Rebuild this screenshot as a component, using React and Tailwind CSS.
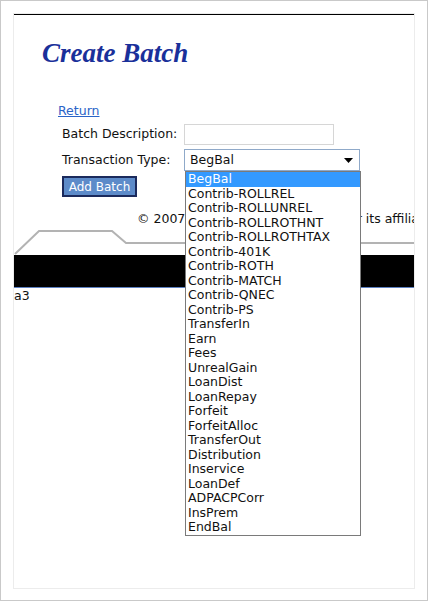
import React from 'react';

const options = [
  'BegBal', 'Contrib-ROLLREL', 'Contrib-ROLLUNREL', 'Contrib-ROLLROTHNT', 'Contrib-ROLLROTHTAX',
  'Contrib-401K', 'Contrib-ROTH', 'Contrib-MATCH', 'Contrib-QNEC', 'Contrib-PS', 'TransferIn',
  'Earn', 'Fees', 'UnrealGain', 'LoanDist', 'LoanRepay', 'Forfeit', 'ForfeitAlloc', 'TransferOut',
  'Distribution', 'Inservice', 'LoanDef', 'ADPACPCorr', 'InsPrem', 'EndBal',
];

const App = () => {
  return (
    <div className="relative w-[428px] h-[601px] overflow-hidden bg-white border border-[#c9c9c9] font-['DejaVu_Sans',sans-serif] text-[12.5px] text-[#111]">
      {/* ── Page panel ── */}
      <div className="ml-[12px] mt-[12px] w-[402px] h-[576px] border border-[#ececec]">
        <div className="h-px bg-black" />

        <h1 className="pl-[28px] pt-[22px] font-['Liberation_Serif',serif] italic font-bold text-[27px] leading-[32px] text-[#1a309a]">
          Create Batch
        </h1>

        {/* ── Form ── */}
        <div className="pt-[34px] pl-[44px]">
          <a href="#" className="text-[#2a64c8] underline leading-[15px] block">Return</a>
          <div className="mt-[5px] pl-[4px] flex items-center gap-[5px] h-[22px]">
            <span className="w-[117px] whitespace-nowrap">Batch Description:</span>
            <div className="w-[150px] h-[21px] border border-[#d6d6d6]" />
          </div>
          <div className="mt-[4px] pl-[4px] flex items-center gap-[5px] h-[22px]">
            <span className="w-[117px] whitespace-nowrap">Transaction Type:</span>
            <div className="w-[176px] h-[22px] border border-[#8fa9c9] flex items-center justify-between pl-[5px] pr-[6px]">
              <span>BegBal</span>
              <svg width="9" height="5" viewBox="0 0 9 5"><path d="M0 0h9L4.5 5z" fill="#000" /></svg>
            </div>
          </div>
          <div className="mt-[5px] pl-[4px]">
            <button className="w-[75px] h-[21px] border-2 border-[#1b2a5c] bg-[#5d8bc9] text-white text-[12px] leading-none">
              Add Batch
            </button>
          </div>
        </div>

        <p className="mt-[14px] pl-[123px] whitespace-nowrap overflow-hidden leading-[15px]">
          © 2007 ADP Retirement Services or its affiliates
        </p>

        {/* ── Tab strip ── */}
        <svg className="block mt-[3px]" width="400" height="26" viewBox="0 0 400 26">
          <path d="M1 25 L25 2 L98 2 L112 14 L400 14" fill="none" stroke="#b3b3b3" strokeWidth="2" />
        </svg>
        <div className="h-[33px] bg-black border-b border-[#5b7fc0]" />
        <p className="leading-[15px]">a3</p>
      </div>

      {/* ── Open select list ── */}
      <ul className="absolute left-[184px] top-[170px] w-[176px] bg-white border border-[#7a7a7a]">
        {options.map((opt, i) => (
          <li
            key={opt}
            className={`h-[14.5px] leading-[14.5px] pl-[2px] whitespace-nowrap ${i === 0 ? 'bg-[#3399ff] text-white' : ''}`}
          >
            {opt}
          </li>
        ))}
      </ul>
    </div>
  );
};

export default App;
